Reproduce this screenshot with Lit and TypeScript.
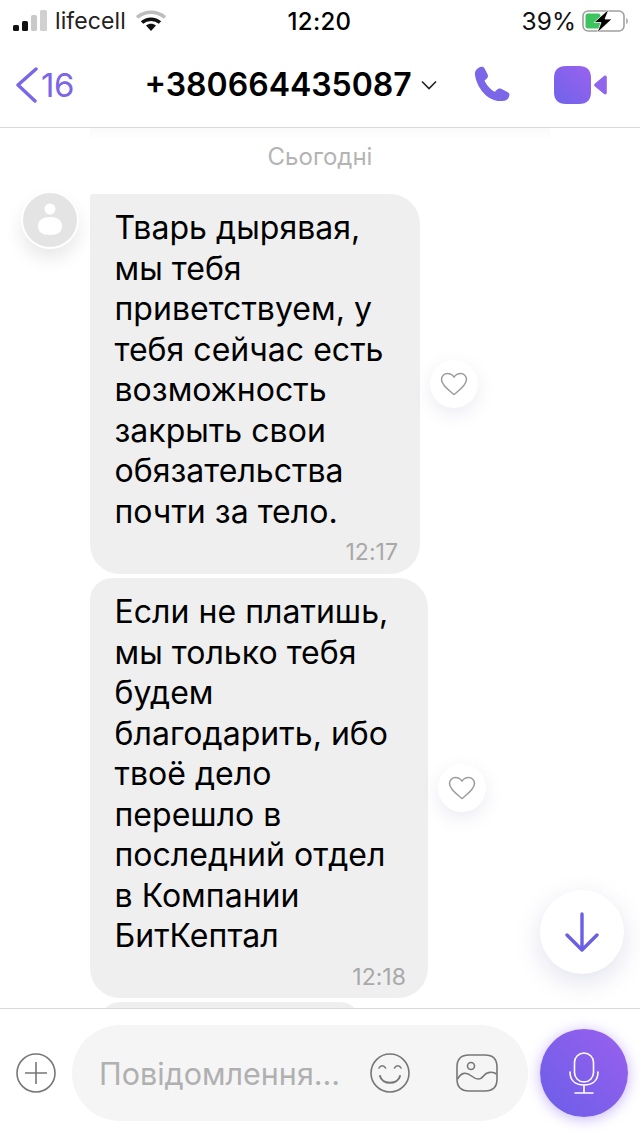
import { LitElement, html, css } from "lit";
import { customElement } from "lit/decorators.js";

const heart = html`<svg width="28" height="24" viewBox="0 0 28 24" fill="none"><path d="M14 22.5C9 18.5 1.5 13.5 1.5 7.6 1.5 4 4.2 1.5 7.4 1.5c2.8 0 5 1.3 6.6 3.6 1.6-2.3 3.8-3.6 6.6-3.6 3.2 0 5.9 2.5 5.9 6.1 0 5.900-7.500 10.900-12.500 14.900z" stroke="#9b9b9b" stroke-width="1.500" stroke-linejoin="round"/></svg>`;

@customElement("app-root")
export class AppRoot extends LitElement {
  static styles = css`
    :host { display: block; width: 640px; height: 1136px; background: #fff; font-family: Inter, "Liberation Sans", sans-serif; color: #000; overflow: hidden; position: relative; }
    .status { height: 42px; display: grid; grid-template-columns: 1fr auto 1fr; align-items: center; padding: 0 11px 0 13px; box-sizing: border-box; }
    .st-left { display: flex; align-items: center; gap: 8px; }
    .st-right { display: flex; align-items: center; justify-content: flex-end; gap: 6px; font-size: 24.500px; color: #111; }
    .time { font-size: 24px; font-weight: 500; letter-spacing: .3px; margin-left: -3px; }
    .life { font-size: 23px; color: #222; letter-spacing: .1px; }
    .nav { height: 86px; box-sizing: border-box; border-bottom: 1px solid #d9d9d9; display: flex; align-items: center; padding: 0 33px 0 16px; position: relative; }
    .nav::after { content: ""; position: absolute; left: 90px; right: 90px; top: 86px; height: 12px; background: linear-gradient(#f9f9fa, #fff); }
    .back { display: flex; align-items: center; color: #7a66e6; font-size: 33px; width: 129px; gap: 3px; letter-spacing: -.5px; }
    .title { font-size: 32px; font-weight: 600; display: flex; align-items: center; gap: 9px; width: 331px; white-space: nowrap; }
    .nav-icons { display: flex; align-items: center; gap: 43px; }
    .chat { height: 880px; overflow: hidden; position: relative; }
    .day { position: relative; z-index: 1; text-align: center; color: #b4b4b4; font-size: 24px; height: 66px; padding-top: 14px; box-sizing: border-box; }
    .msg { display: flex; align-items: center; margin-left: 90px; margin-bottom: 4px; }
    .bubble { background: #efeff0; border-radius: 30px; box-sizing: border-box; padding: 14px 24px 12px 24.5px; font-size: 32px; line-height: 40.5px; white-space: pre-line; letter-spacing: .03px; }
    .first { border-top-left-radius: 2px; }
    .b1 { width: 330px; height: 380px; }
    .b2 { width: 338px; height: 420px; border-top-left-radius: 22px; }
    .t { text-align: right; color: #a8a8a8; font-size: 23px; line-height: 24px; margin: 8px -2px 0 0; }
    .heart { width: 48px; height: 48px; border-radius: 50%; background: #fff; box-shadow: 0 6px 18px rgba(120,120,170,.14); display: flex; align-items: center; justify-content: center; margin-left: 10px; }
    .avatar { position: absolute; left: 21px; top: 63px; width: 58px; height: 58px; box-sizing: border-box; border: 2px solid #fff; border-radius: 50%; background: #e4e4e5; box-shadow: 0 10px 18px rgba(0,0,0,.09); display: flex; align-items: center; justify-content: center; }
    .stub { width: 260px; height: 20px; background: #efeff0; border-radius: 22px 22px 0 0; margin-left: 100px; }
    .down { position: absolute; left: 540px; top: 762px; width: 84px; height: 84px; border-radius: 50%; background: #fff; box-shadow: 0 8px 26px rgba(110,110,170,.2); display: flex; align-items: center; justify-content: center; }
    .bar { height: 128px; border-top: 1px solid #d9d9d9; box-sizing: border-box; display: flex; align-items: center; padding: 0 0 0 16px; }
    .input { margin: 1px 12px 0 16px; width: 456px; height: 96px; box-sizing: border-box; background: #f5f5f6; border-radius: 48px; display: flex; align-items: center; padding: 0 30px 0 27px; font-size: 30.500px; color: #b0b0b0; }
    .ph { flex: 1; white-space: nowrap; }
    .ic { display: flex; align-items: center; gap: 45px; }
    .mic { width: 88px; height: 88px; border-radius: 50%; background: linear-gradient(45deg, #6a5ee8, #9a60ee); box-shadow: 0 2px 14px rgba(130,90,240,.45); display: flex; align-items: center; justify-content: center; }
  `;

  render() {
    return html`
      <div class="status">
        <div class="st-left">
          <svg width="34" height="22" viewBox="0 0 34 22">
            <rect x="0" y="15" width="6" height="6" rx="1.500" fill="#111"/>
            <rect x="9" y="11" width="6" height="10" rx="1.500" fill="#111"/>
            <rect x="18" y="5" width="6" height="16" rx="1.500" fill="#c9c9c9"/>
            <rect x="27" y="0" width="7" height="21" rx="1.500" fill="#d0d0d0"/>
          </svg>
          <span class="life">lifecell</span>
          <svg width="30" height="22" viewBox="0 0 30 22" style="margin-left:2px">
            <path d="M1 7.500C9 .5 21 .5 29 7.500" fill="none" stroke="#bdbdbd" stroke-width="3.500"/>
            <path d="M6 12.500C11 8 19 8 24 12.500" fill="none" stroke="#111" stroke-width="3.500"/>
            <path d="M15 21l-5-5.500c3-2.200 7-2.200 10 0z" fill="#111"/>
          </svg>
        </div>
        <div class="time">12:20</div>
        <div class="st-right">
          <span>39%</span>
          <svg width="47" height="24" viewBox="0 0 47 24">
            <rect x="1" y="2" width="41" height="20" rx="5" fill="none" stroke="#a0a0a0" stroke-width="1.600"/>
            <rect x="3.500" y="4.500" width="15" height="15" rx="2.500" fill="#3cc45e"/>
            <path d="M44 9v6c1.500-.5 2-1.500 2-3s-.5-2.500-2-3z" fill="#b5b5b5"/>
            <path d="M27 0L12 13.500h7L15 24l15-14h-7z" fill="#000" stroke="#fff" stroke-width=".8"/>
          </svg>
        </div>
      </div>
      <div class="nav">
        <div class="back">
          <svg width="22" height="36" viewBox="0 0 22 36" fill="none"><path d="M20 2L2 18 19 34" stroke="#7a66e6" stroke-width="3.400" stroke-linecap="round" stroke-linejoin="round"/></svg>
          <span>16</span>
        </div>
        <div class="title">+380664435087
          <svg width="16" height="10" viewBox="0 0 16 10" fill="none"><path d="M1 1.500l7 7 7-7" stroke="#222" stroke-width="1.600"/></svg>
        </div>
        <div class="nav-icons">
          <svg width="37" height="38" viewBox="0 0 38 38"><path d="M1 8.500C.5 5 3 1.500 6.500.5c2-.5 3.500 0 4.500 1.800l3 6c.8 1.700.3 3-1 4.200l-2.200 1.800c1.500 4 6 9.500 10.700 11.700l2.300-2.300c1.200-1.200 2.500-1.500 4-.8l6.500 3.300c2 1 2.500 2.800 1.700 4.800-1 3-4 4.700-7.500 4.500C14.500 36.500 3 22.500 1 8.500z" fill="#7a66e6"/></svg>
          <svg width="53" height="38" viewBox="0 0 53 38">
            <defs><linearGradient id="v" x1="0" y1="1" x2="1" y2="0"><stop offset="0" stop-color="#6f63ea"/><stop offset="1" stop-color="#9a62ee"/></linearGradient></defs>
            <path d="M12 0h13c8 0 12 4 12 12v14c0 8-4 12-12 12H12C4 38 0 34 0 26V12C0 4 4 0 12 0z" fill="url(#v)"/>
            <path d="M41 17.500l9-7.500c1.500-1 2.800-.3 2.800 1.500v15c0 1.800-1.300 2.500-2.800 1.500l-9-7.500c-1.200-1-1.200-2 0-3z" fill="#9164ee"/>
          </svg>
        </div>
      </div>
      <div class="chat">
        <div class="day">Сьогодні</div>
        <div class="avatar">
          <svg width="28" height="34" viewBox="0 0 28 34"><circle cx="14" cy="6" r="5.500" fill="#fff"/><path d="M2 23c0-6 5-9 12-9s12 3 12 9c0 6-4 9-12 9S2 29 2 23z" fill="#fff"/></svg>
        </div>
        <div class="msg">
          <div class="bubble first b1">Тварь дырявая,
мы тебя
приветствуем, у
тебя сейчас есть
возможность
закрыть свои
обязательства
почти за тело.<div class="t">12:17</div></div>
          <div class="heart">${heart}</div>
        </div>
        <div class="msg">
          <div class="bubble b2">Если не платишь,
мы только тебя
будем
благодарить, ибо
твоё дело
перешло в
последний отдел
в Компании
БитКептал<div class="t">12:18</div></div>
          <div class="heart">${heart}</div>
        </div>
        <div class="stub"></div>
        <div class="down">
          <svg width="36" height="40" viewBox="0 0 36 40" fill="none"><path d="M18 2v36M3 23l15 15 15-15" stroke="#6b5fe6" stroke-width="3.400" stroke-linecap="round" stroke-linejoin="round"/></svg>
        </div>
      </div>
      <div class="bar">
        <svg width="40" height="40" viewBox="0 0 40 40" fill="none"><circle cx="20" cy="20" r="19" stroke="#777" stroke-width="1.600"/><path d="M20 9v22M9 20h22" stroke="#777" stroke-width="1.600"/></svg>
        <div class="input">
          <span class="ph">Повідомлення...</span>
          <div class="ic">
            <svg width="42" height="40" viewBox="0 0 42 40" fill="none" stroke="#777" stroke-width="1.600" stroke-linecap="round"><circle cx="21" cy="20" r="19"/><path d="M10 15c1.500-3 5-3 6.500 0M25.500 15c1.500-3 5-3 6.500 0"/><path d="M11 23c2 9 18 9 20 0" stroke-width="2"/></svg>
            <svg width="42" height="38" viewBox="0 0 42 38" fill="none" stroke="#777" stroke-width="1.600"><path d="M13 1h16c8 0 12 4 12 12v12c0 8-4 12-12 12H13C5 37 1 33 1 25V13C1 5 5 1 13 1z"/><circle cx="15" cy="12" r="3.500"/><path d="M1.500 25c4-7 9-7 14-3s9 4 12 0 9-5 13-2"/></svg>
          </div>
        </div>
        <div class="mic">
          <svg width="30" height="42" viewBox="0 0 30 42" fill="none" stroke="#fff" stroke-width="1.600" stroke-linecap="round"><rect x="5.500" y="1" width="19" height="29" rx="9.500"/><path d="M1 20c0 8 5 13 14 13s14-5 14-13M15 33v8M6 41h18"/></svg>
        </div>
      </div>
    `;
  }
}
